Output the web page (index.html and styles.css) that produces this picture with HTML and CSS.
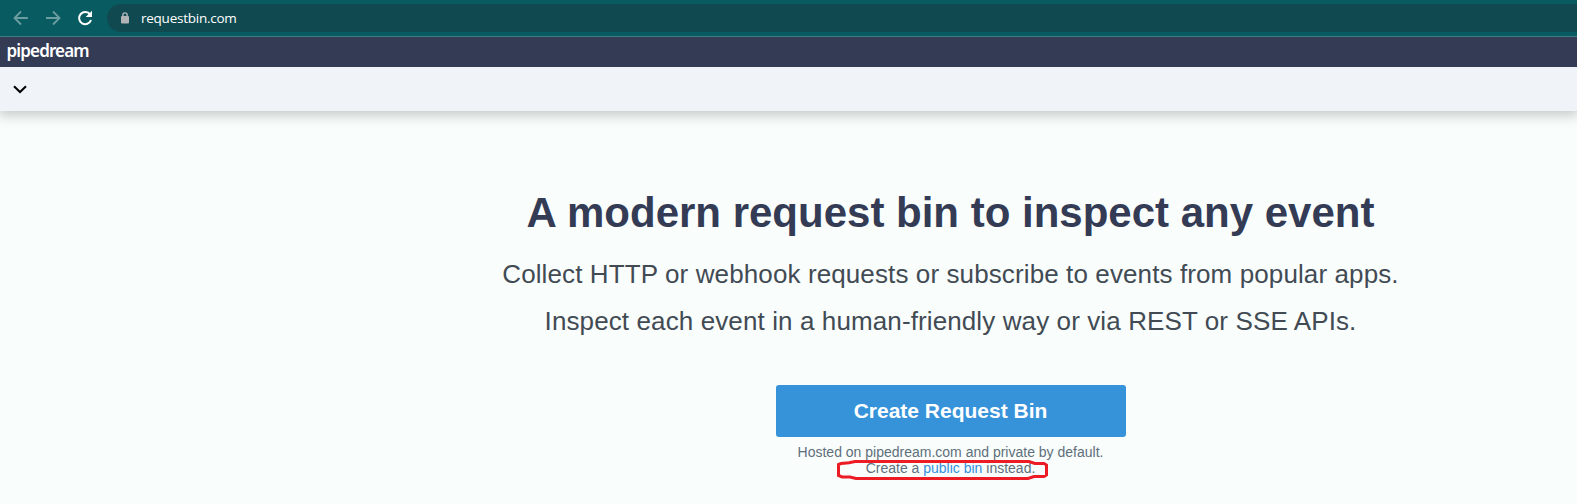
FILE: index.html
```html
<!DOCTYPE html>
<html lang="en">
<head>
<meta charset="utf-8">
<title>RequestBin</title>
<link rel="stylesheet" href="styles.css">
</head>
<body>
<div class="toolbar">
  <svg class="tool back" width="16" height="16" viewBox="0 0 16 16"><path d="M14.8 8H2M8 1.5 1.5 8 8 14.5"/></svg>
  <svg class="tool forward" width="16" height="16" viewBox="0 0 16 16"><path d="M1 8H14M8 1.5 14.5 8 8 14.5"/></svg>
  <svg class="tool reload" width="16" height="16" viewBox="0 0 16 16"><path class="arc" d="M13.2 4.6A6.1 6.1 0 1 0 14 10"/><path class="tip" d="M15 .7V7H8.7z"/></svg>
  <div class="address">
    <svg class="lock" width="8" height="12" viewBox="0 0 8 12"><path class="shackle" d="M1.9 5V3a2.1 2.1 0 0 1 4.2 0v2"/><rect class="body" y="4" width="8" height="7.5" rx="1"/></svg>
    <span class="url">requestbin.com</span>
  </div>
</div>
<header class="brandbar"><span class="brand">pipedream</span></header>
<nav class="subnav">
  <svg width="14" height="9" viewBox="0 0 14 9"><path d="M1 1.2 7 7 13 1.2"/></svg>
</nav>
<main class="hero">
  <h1>A modern request bin to inspect any event</h1>
  <p class="lead">Collect HTTP or webhook requests or subscribe to events from popular apps.</p>
  <p class="lead second">Inspect each event in a human-friendly way or via REST or SSE APIs.</p>
  <button class="cta">Create Request Bin</button>
  <p class="note">Hosted on pipedream.com and private by default.</p>
  <p class="note public">Create a <a href="#">public bin</a> instead.
    <svg class="mark" width="212" height="22" viewBox="0 0 212 22"><path d="M19 2.5H193L199 4.5H208L210.5 6V16L208 17.5H198L192 19.5H20L14 18H6L2.5 16.5V5.5L5 4.5 13 3.8z"/></svg>
  </p>
</main>
</body>
</html>
```
FILE: styles.css
```css
body {
  margin: 0;
  height: 504px;
  overflow: hidden;
  background: #f9fdfc;
  font-family: "Liberation Sans", Arial, sans-serif;
}
.toolbar {
  box-sizing: border-box;
  height: 37px;
  display: flex;
  align-items: center;
  padding-left: 13px;
  background: #085b60;
  border-bottom: 1px solid #3f7d82;
}
.tool {
  fill: none;
  stroke: #6c9da0;
  stroke-width: 1.8;
  margin-right: 16px;
}
.reload { stroke: #fff; stroke-width: 2; margin-right: 14px; }
.tip { fill: #fff; stroke: none; }
.address {
  flex: 1;
  height: 28px;
  display: flex;
  align-items: center;
  padding-left: 14px;
  background: #10494f;
  border-radius: 14px 0 0 14px;
}
.lock { margin-right: 12px; }
.shackle { fill: none; stroke: #b0bcbe; stroke-width: 1.4; }
.body { fill: #b0b4b6; }
.url {
  color: #fff;
  font: 13.5px/20px "Open Sans", sans-serif;
  letter-spacing: -0.25px;
}
.brandbar {
  height: 30px;
  background: #343b55;
  padding-left: 6.5px;
}
.brand {
  display: block;
  color: #fff;
  font: 600 17px/27px "Noto Sans", sans-serif;
  letter-spacing: -0.85px;
}
.subnav {
  height: 44px;
  display: flex;
  align-items: center;
  padding-left: 13px;
  background: #f0f4f8;
  box-shadow: 0 2px 12px 2px rgba(0, 0, 0, .22);
  clip-path: inset(0 0 -20px 0);
}
.subnav svg { fill: none; stroke: #000; stroke-width: 2; }
.hero {
  margin-left: 324px;
  padding-top: 77px;
  display: flex;
  flex-direction: column;
  align-items: center;
}
h1 {
  margin: 0;
  font-size: 42px;
  line-height: 50px;
  color: #343b55;
  white-space: nowrap;
}
.lead {
  margin: 13px 0 0;
  font-size: 26px;
  line-height: 47px;
  letter-spacing: 0.11px;
  color: #424b54;
  white-space: nowrap;
}
.second { margin-top: 0; }
.cta {
  width: 350px;
  height: 52px;
  margin: 40px 0 7px;
  border: 0;
  border-radius: 3px;
  background: #3693da;
  color: #fff;
  font: bold 21px "Liberation Sans", Arial, sans-serif;
}
.note {
  position: relative;
  margin: 0;
  font-size: 14px;
  line-height: 16px;
  color: #606f7b;
}
.note a { color: #3490dc; text-decoration: none; }
.mark {
  position: absolute;
  left: -30px;
  top: -1px;
  fill: none;
  stroke: #ed1c24;
  stroke-width: 3;
}
```
